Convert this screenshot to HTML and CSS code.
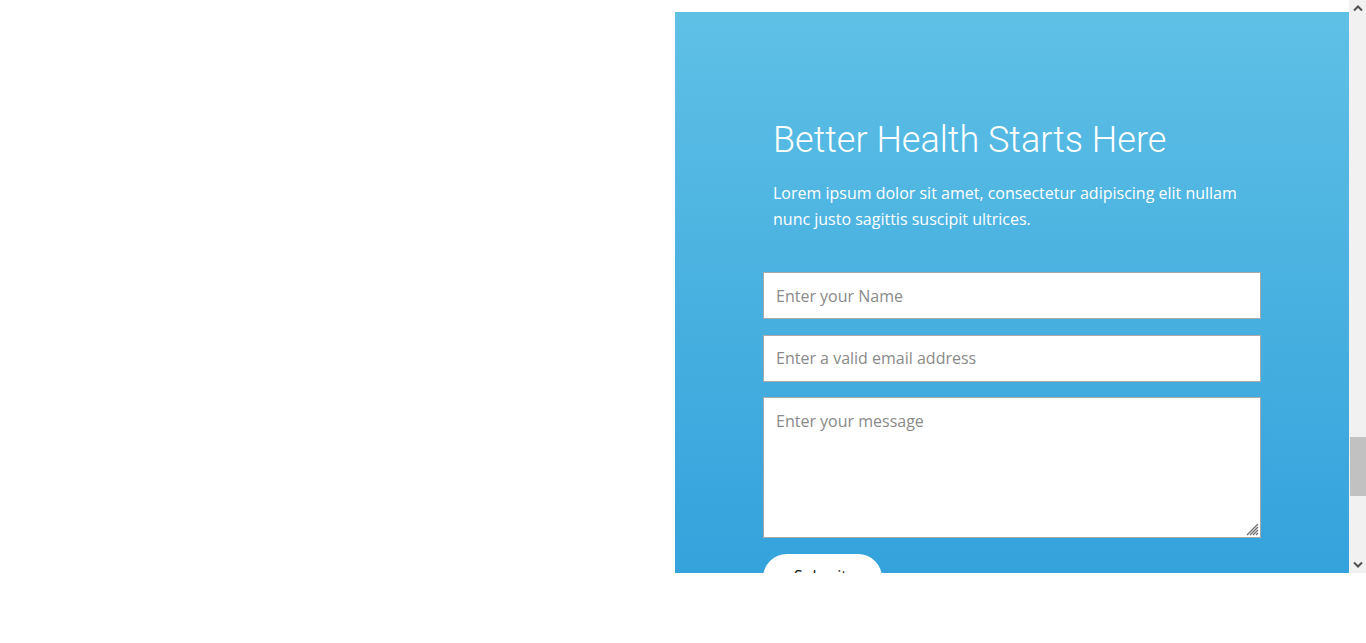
FILE: index.html
```html
<!DOCTYPE html>
<html lang="en">
<head>
<meta charset="utf-8">
<title>Better Health Starts Here</title>
<link rel="stylesheet" href="styles.css">
</head>
<body>
<div class="frame">
  <div class="viewport">
    <section class="split">
      <div class="split-left"></div>
      <div class="panel">
        <div class="panel-text">
          <h2 class="panel-title">Better Health Starts Here</h2>
          <p class="panel-desc">Lorem ipsum dolor sit amet, consectetur adipiscing elit nullam nunc justo sagittis suscipit ultrices.</p>
        </div>
        <form class="contact-form">
          <input class="field" type="text" placeholder="Enter your Name">
          <input class="field" type="email" placeholder="Enter a valid email address">
          <div class="area-wrap">
            <textarea class="field field-area" placeholder="Enter your message"></textarea>
            <svg class="grip" width="14" height="14" viewBox="0 0 14 14" aria-hidden="true">
              <path d="M13 2 L2 13 M13 5 L5 13 M13 8 L8 13 M13 11 L11 13" stroke="#6f6f6f" stroke-width="1.3" fill="none"/>
            </svg>
          </div>
          <div class="form-actions">
            <button class="submit-btn" type="button">Submit</button>
          </div>
        </form>
      </div>
    </section>
  </div>
  <div class="scrollbar" aria-hidden="true">
    <div class="sb-arrow">
      <svg width="10" height="7" viewBox="0 0 10 7"><path d="M1 5.5 L5 1.5 L9 5.5" stroke="#505050" stroke-width="2" fill="none"/></svg>
    </div>
    <div class="sb-track">
      <div class="sb-thumb" style="margin-top:420px"></div>
    </div>
    <div class="sb-arrow">
      <svg width="10" height="7" viewBox="0 0 10 7"><path d="M1 1.5 L5 5.5 L9 1.5" stroke="#505050" stroke-width="2" fill="none"/></svg>
    </div>
  </div>
</div>
</body>
</html>
```

FILE: styles.css
```css
html, body {
  margin: 0;
  padding: 0;
  background: #ffffff;
}
.frame {
  display: flex;
  height: 573px;
  overflow: hidden;
}
.viewport {
  flex: 1;
  overflow: hidden;
  padding-top: 12px;
  background: #ffffff;
}
.split {
  display: grid;
  grid-template-columns: 675px 1fr;
}
.panel {
  background: linear-gradient(180deg, #5ec0e5 0%, #34a2dc 561px, #2f9bd8 100%);
  padding: 100px 88px 60px 88px;
  min-height: 640px;
}
.panel-text {
  padding: 0 10px;
}
.panel-title {
  margin: 0;
  padding-top: 1px;
  font-family: Roboto, "Liberation Sans", sans-serif;
  font-weight: 300;
  font-size: 36px;
  line-height: 54px;
  color: #ffffff;
}
.panel-desc {
  margin: 13px 0 0;
  font-family: "Open Sans", "Liberation Sans", sans-serif;
  font-size: 16px;
  line-height: 26px;
  color: #ffffff;
}
.contact-form {
  margin-top: 40px;
  display: flex;
  flex-direction: column;
  gap: 15.5px;
}
.field {
  display: block;
  box-sizing: border-box;
  width: 100%;
  height: 47px;
  margin: 0;
  padding: 0 12px;
  border: 1px solid #a9a9a9;
  border-radius: 0;
  background: #ffffff;
  font-family: "Open Sans", "Liberation Sans", sans-serif;
  font-size: 16px;
  color: #333333;
  outline: none;
}
.field::placeholder {
  color: #8a8a8a;
}
.area-wrap {
  position: relative;
}
.field-area {
  height: 141px;
  padding: 11px 12px;
  line-height: 24px;
  resize: none;
}
.grip {
  position: absolute;
  right: 2px;
  bottom: 2px;
}
.form-actions {
  display: flex;
}
.submit-btn {
  box-sizing: border-box;
  width: 119px;
  height: 48px;
  padding: 0 4px 4px 0;
  border: none;
  border-radius: 24px;
  background: #ffffff;
  color: #111111;
  font-family: "Open Sans", "Liberation Sans", sans-serif;
  font-size: 16px;
  cursor: pointer;
}
.scrollbar {
  width: 17px;
  flex: none;
  display: flex;
  flex-direction: column;
  background: #f1f1f1;
}
.sb-arrow {
  height: 17px;
  flex: none;
  display: flex;
  align-items: center;
  justify-content: center;
}
.sb-track {
  flex: 1;
  padding-left: 1px;
}
.sb-thumb {
  height: 59px;
  background: #c1c1c1;
}
```
